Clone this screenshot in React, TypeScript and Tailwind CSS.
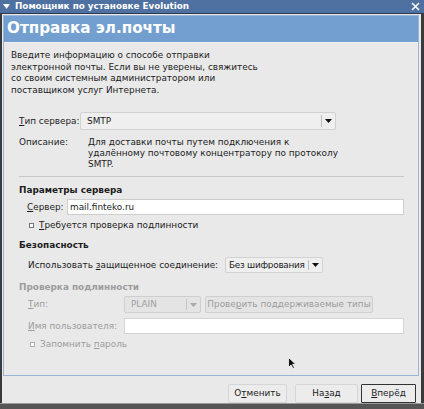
import React from 'react';

function Combo({ text, w, disabled, tight }: { text: string; w: string; disabled?: boolean; tight?: boolean }) {
	return (
		<div
			className={`${w} shrink-0 h-full flex items-center border ${
				disabled ? 'border-[#cfcfcf] bg-[#e4e4e4] text-[#a0a0a0]' : 'border-[#d2d2d2] bg-[#efefef] text-[#1a1a1a]'
			} rounded-[2px]`}
		>
			<span
				className={`flex-1 whitespace-nowrap overflow-hidden ${tight ? 'pl-[3px] tracking-[-0.25px]' : 'pl-[6px]'}`}
			>
				{text}
			</span>
			<span className={`w-px h-[70%] ${disabled ? 'bg-[#c4c4c4]' : 'bg-[#bdbdbd]'}`} />
			<span className="w-[13px] flex justify-center">
				<svg width="7" height="4" viewBox="0 0 7 4">
					<path d="M0 0h7L3.5 4z" fill={disabled ? '#a8a8a8' : '#111'} />
				</svg>
			</span>
		</div>
	);
}

function Check({ children, disabled }: { children: React.ReactNode; disabled?: boolean }) {
	return (
		<div className={`flex items-center gap-[5px] ${disabled ? 'text-[#9c9c9c]' : ''}`}>
			<span className={`w-[5px] h-[5px] border ${disabled ? 'border-[#b0b0b0]' : 'border-[#777]'} bg-white`} />
			<span>{children}</span>
		</div>
	);
}

export default function App() {
	return (
		<div className="w-[424px] h-[409px] flex flex-col bg-[#3a3a3a] font-['DejaVu_Sans',sans-serif] text-[8.9px] leading-none text-[#1c1c1c] whitespace-nowrap relative overflow-hidden">
			{/* title bar */}
			<div className="h-[13px] bg-[#4f71a2] flex items-center text-white font-bold text-[8.8px] border-b border-[#2a3950] box-content">
				<svg width="7" height="5" viewBox="0 0 7 5" className="ml-[3px] mr-[5px]">
					<path d="M0 0h7L3.5 5z" fill="#fff" />
				</svg>
				<span className="flex-1">Помощник по установке Evolution</span>
				<svg width="9" height="9" viewBox="0 0 9 9" className="mr-[4px]">
					<path d="M1 1l7 7M8 1L1 8" stroke="#fff" strokeWidth="1.6" />
				</svg>
			</div>

			{/* content */}
			<div className="flex-1 flex flex-col bg-[#e9e9e9] ml-[2px] mr-[3px] pt-[1px]">
				<div className="h-[361px] ml-[1px] mr-[2px] border border-[#9ab5d6] flex flex-col">
					<div className="h-[26px] bg-[#729fcf] flex items-center pl-[3px] text-white font-bold text-[15.2px] border-b border-[#f2f2f2] box-content">
						Отправка эл.почты
					</div>

					<div className="flex flex-col pl-[15px] pr-[14px]">
						<p className="mt-[7px] -ml-[8px] leading-[11.5px]">
							Введите информацию о способе отправки
							<br />
							электронной почты. Если вы не уверены, свяжитесь
							<br />
							со своим системным администратором или
							<br />
							поставщиком услуг Интернета.
						</p>

						<div className="mt-[16px] h-[18px] flex items-center">
							<span className="w-[61px] shrink-0">
								<u>Т</u>ип сервера:
							</span>
							<Combo text="SMTP" w="w-[256px]" />
						</div>

						<div className="mt-[7px] flex">
							<span className="w-[69px] shrink-0 leading-[11px]">Описание:</span>
							<p className="leading-[11px]">
								Для доставки почты путем подключения к
								<br />
								удалённому почтовому концентратору по протоколу
								<br />
								SMTP.
							</p>
						</div>

						<div className="mt-[6px] h-px bg-[#c8c8c8] w-[385px]" />

						<div className="mt-[7px] h-[12px] flex items-center font-bold">Параметры сервера</div>

						<div className="mt-[3px] h-[16px] flex items-center pl-[8px]">
							<span className="w-[40px] shrink-0">
								<u>С</u>ервер:
							</span>
							<div className="w-[337px] shrink-0 h-full bg-white border border-[#cdcdcd] flex items-center pl-[2px]">
								mail.finteko.ru
							</div>
						</div>

						<div className="mt-[4px] h-[12px] flex items-center pl-[10px]">
							<Check>
								<u>Т</u>ребуется проверка подлинности
							</Check>
						</div>

						<div className="mt-[8px] h-[12px] flex items-center font-bold">Безопасность</div>

						<div className="mt-[6px] h-[16px] flex items-center pl-[9px]">
							<span className="w-[197px] shrink-0">
								Использовать <u>з</u>ащищенное соединение:
							</span>
							<Combo text="Без шифрования" w="w-[98px]" tight />
						</div>

						<div className="mt-[8px] h-[12px] flex items-center font-bold text-[#9c9c9c]">
							Проверка подлинности
						</div>

						<div className="mt-[3px] h-[17px] flex items-center pl-[9px] text-[#9c9c9c]">
							<span className="w-[96px] shrink-0">
								<u>Т</u>ип:
							</span>
							<Combo text="PLAIN" w="w-[77px]" disabled />
							<div className="ml-[4px] w-[168px] shrink-0 h-full border border-[#cfcfcf] bg-[#e4e4e4] rounded-[2px] flex items-center justify-center">
								Прове<u>р</u>ить поддерживаемые типы
							</div>
						</div>

						<div className="mt-[5px] h-[16px] flex items-center pl-[9px] text-[#9c9c9c]">
							<span className="w-[96px] shrink-0">
								<u>И</u>мя пользователя:
							</span>
							<div className="w-[280px] shrink-0 h-full bg-white border border-[#d4d4d4]" />
						</div>

						<div className="mt-[4px] h-[12px] flex items-center pl-[11px]">
							<Check disabled>
								Запомнить <u>п</u>ароль
							</Check>
						</div>
					</div>
				</div>

				{/* buttons */}
				<div className="flex justify-end items-start mt-[8px] pr-[5px]">
					<div className="w-[59px] h-[19px] flex items-center justify-center bg-[#ececec] border border-[#d6d6d6] rounded-[2px]">
						О<u>т</u>менить
					</div>
					<div className="ml-[8px] w-[63px] h-[19px] flex items-center justify-center bg-[#ececec] border border-[#d6d6d6] rounded-[2px]">
						На<u>з</u>ад
					</div>
					<div className="ml-[3px] w-[55px] h-[19px] flex items-center justify-center bg-[#ececec] border border-[#333] rounded-[1px]">
						<u>В</u>перёд
					</div>
				</div>
			</div>

			<div className="h-[6px] bg-[#555] border-t border-[#9a9a9a]" />

			{/* mouse pointer */}
			<svg width="8" height="12" viewBox="0 0 8 12" className="absolute left-[288px] top-[357px]">
				<path d="M0.5 0.5v10l2.5-2.5 2 3.5 1.5-.8-2-3.4h3.3z" fill="#111" stroke="#fff" strokeWidth="0.8" />
			</svg>
		</div>
	);
}
